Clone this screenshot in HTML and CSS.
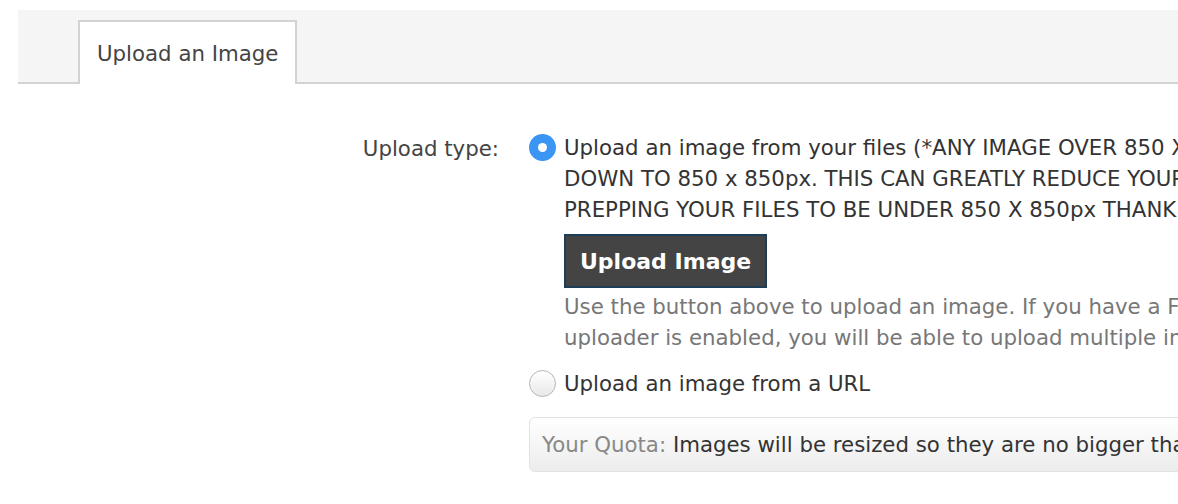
FILE: index.html
```html
<!DOCTYPE html>
<html lang="en">
<head>
<meta charset="utf-8">
<title>Upload an Image</title>
<link rel="stylesheet" href="styles.css">
</head>
<body>
<div class="page">
  <div class="tabbar">
    <div class="tab">Upload an Image</div>
  </div>
  <form class="form">
    <div class="row">
      <div class="label">Upload type:</div>
      <div class="field">
        <div class="option">
          <span class="radio checked"></span>
          <div class="option-text">
            <span class="line">Upload an image from your files (*ANY IMAGE OVER 850 X 850px WILL BE RESIZED</span>
            <span class="line">DOWN TO 850 x 850px. THIS CAN GREATLY REDUCE YOUR IMAGE QUALITY. PLEASE CONSIDER</span>
            <span class="line">PREPPING YOUR FILES TO BE UNDER 850 X 850px THANK YOU*)</span>
          </div>
        </div>
        <div class="sub">
          <button type="button" class="btn">Upload Image</button>
          <p class="help">
            <span class="line">Use the button above to upload an image. If you have a Flash-enabled browser and the Flash</span>
            <span class="line">uploader is enabled, you will be able to upload multiple images at once.</span>
          </p>
        </div>
        <div class="option url">
          <span class="radio"></span>
          <div class="option-text"><span class="line">Upload an image from a URL</span></div>
        </div>
        <div class="quota"><span class="quota-label">Your Quota:</span> Images will be resized so they are no bigger than 850 x 850 pixels.</div>
      </div>
    </div>
  </form>
</div>
</body>
</html>
```
FILE: styles.css
```css
html, body {
  margin: 0;
  padding: 0;
  background: #fff;
  overflow: hidden;
}
body {
  font-family: "DejaVu Sans", sans-serif;
  font-size: 21.3px;
  color: #333;
}
.page {
  margin: 10px 0 0 18px;
  width: 1500px;
}
.tabbar {
  background: #f5f5f5;
  border-bottom: 2px solid #d3d3d3;
  height: 62px;
  padding: 10px 0 0 60px;
  display: flex;
  align-items: flex-start;
}
.tab {
  background: #fff;
  border: 2px solid #d3d3d3;
  border-bottom: none;
  height: 64px;
  box-sizing: border-box;
  padding: 0 17px;
  line-height: 64px;
  color: #444;
}
.form {
  padding-top: 48px;
}
.row {
  display: flex;
  gap: 30px;
}
.label {
  flex: none;
  width: 481px;
  text-align: right;
  color: #444;
  line-height: 31px;
  padding-top: 1px;
}
.field {
  flex: none;
  display: flex;
  flex-direction: column;
}
.option {
  display: flex;
  gap: 8px;
  align-items: flex-start;
  line-height: 31px;
  color: #333;
}
.line {
  display: block;
  white-space: nowrap;
}
.radio {
  width: 27px;
  height: 27px;
  border-radius: 50%;
  box-sizing: border-box;
  flex: none;
  margin-top: 2px;
  border: 1px solid #b5b5b5;
  background: linear-gradient(#ffffff, #e8e8e8);
  display: flex;
  align-items: center;
  justify-content: center;
}
.radio.checked {
  border: none;
  background: #3b95f3;
}
.radio.checked::after {
  content: "";
  width: 9px;
  height: 9px;
  border-radius: 50%;
  background: #fff;
}
.sub {
  padding-left: 35px;
  padding-top: 9px;
}
.btn {
  font-family: inherit;
  font-size: 22px;
  font-weight: bold;
  color: #fff;
  background: #444;
  border: 2px solid #1e3d56;
  height: 54px;
  padding: 0 14px;
  margin: 0;
  cursor: pointer;
}
.help {
  margin: 3px 0 0;
  color: #777;
  line-height: 31px;
}
.url {
  margin-top: 15px;
}
.quota {
  margin-top: 18px;
  height: 55px;
  box-sizing: border-box;
  border: 1px solid #e2e2e2;
  border-radius: 6px;
  background: linear-gradient(#ffffff, #ececec);
  padding: 0 12px;
  line-height: 53px;
  white-space: nowrap;
  color: #333;
  width: 900px;
}
.quota-label {
  color: #888;
}
```
